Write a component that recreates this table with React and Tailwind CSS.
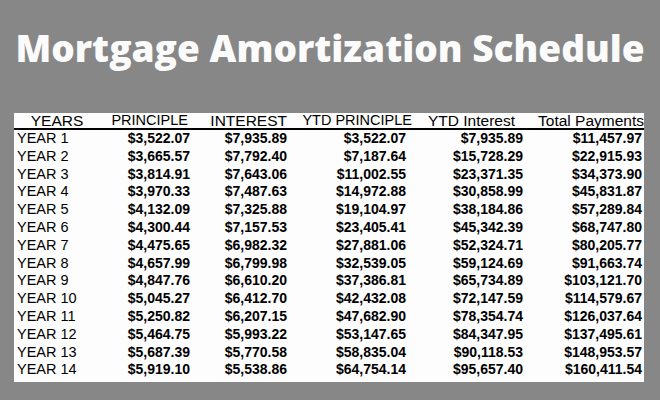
import React from "react";

const rows = [
  ["YEAR 1", "$3,522.07", "$7,935.89", "$3,522.07", "$7,935.89", "$11,457.97"],
  ["YEAR 2", "$3,665.57", "$7,792.40", "$7,187.64", "$15,728.29", "$22,915.93"],
  ["YEAR 3", "$3,814.91", "$7,643.06", "$11,002.55", "$23,371.35", "$34,373.90"],
  ["YEAR 4", "$3,970.33", "$7,487.63", "$14,972.88", "$30,858.99", "$45,831.87"],
  ["YEAR 5", "$4,132.09", "$7,325.88", "$19,104.97", "$38,184.86", "$57,289.84"],
  ["YEAR 6", "$4,300.44", "$7,157.53", "$23,405.41", "$45,342.39", "$68,747.80"],
  ["YEAR 7", "$4,475.65", "$6,982.32", "$27,881.06", "$52,324.71", "$80,205.77"],
  ["YEAR 8", "$4,657.99", "$6,799.98", "$32,539.05", "$59,124.69", "$91,663.74"],
  ["YEAR 9", "$4,847.76", "$6,610.20", "$37,386.81", "$65,734.89", "$103,121.70"],
  ["YEAR 10", "$5,045.27", "$6,412.70", "$42,432.08", "$72,147.59", "$114,579.67"],
  ["YEAR 11", "$5,250.82", "$6,207.15", "$47,682.90", "$78,354.74", "$126,037.64"],
  ["YEAR 12", "$5,464.75", "$5,993.22", "$53,147.65", "$84,347.95", "$137,495.61"],
  ["YEAR 13", "$5,687.39", "$5,770.58", "$58,835.04", "$90,118.53", "$148,953.57"],
  ["YEAR 14", "$5,919.10", "$5,538.86", "$64,754.14", "$95,657.40", "$160,411.54"],
];

const grid = "grid grid-cols-[86px_92px_97px_124px_112px_119px]";

export default function App() {
  return (
    <div className="w-[660px] h-[400px] bg-[#878787] overflow-hidden flex flex-col">
      <h1
        className="pt-[29px] text-center text-[37px] leading-none font-extrabold text-[#fbfbfb] whitespace-nowrap"
        style={{ fontFamily: '"Open Sans", sans-serif' }}
      >
        Mortgage Amortization Schedule
      </h1>
      <div
        className="ml-[14px] mt-[47px] w-[630px] h-[269px] bg-[#fdfdfd] text-black"
        style={{ fontFamily: '"Liberation Sans", Arial, sans-serif' }}
      >
        <div className={`${grid} h-[15px] text-[15.5px] leading-[15px] border-b-2 border-black box-content whitespace-nowrap`}>
          <div className="text-center">YEARS</div>
          <div className="text-right pr-[4px] text-[14.5px]">PRINCIPLE</div>
          <div className="text-right pr-[2px]">INTEREST</div>
          <div className="text-right pr-[1px] text-[14.5px]">YTD PRINCIPLE</div>
          <div className="text-right pr-[10px]">YTD Interest</div>
          <div className="text-right pr-0">Total Payments</div>
        </div>
        {rows.map((r) => (
          <div key={r[0]} className={`${grid} h-[17.8px] items-center leading-[17.8px]`}>
            <div className="pl-[3px] text-[14.5px]">{r[0]}</div>
            <div className="text-right pr-[2px] text-[14px] font-bold">{r[1]}</div>
            <div className="text-right pr-[2px] text-[14px] font-bold">{r[2]}</div>
            <div className="text-right pr-[7px] text-[14px] font-bold">{r[3]}</div>
            <div className="text-right pr-[2px] text-[14px] font-bold">{r[4]}</div>
            <div className="text-right pr-[2px] text-[14px] font-bold">{r[5]}</div>
          </div>
        ))}
      </div>
    </div>
  );
}
